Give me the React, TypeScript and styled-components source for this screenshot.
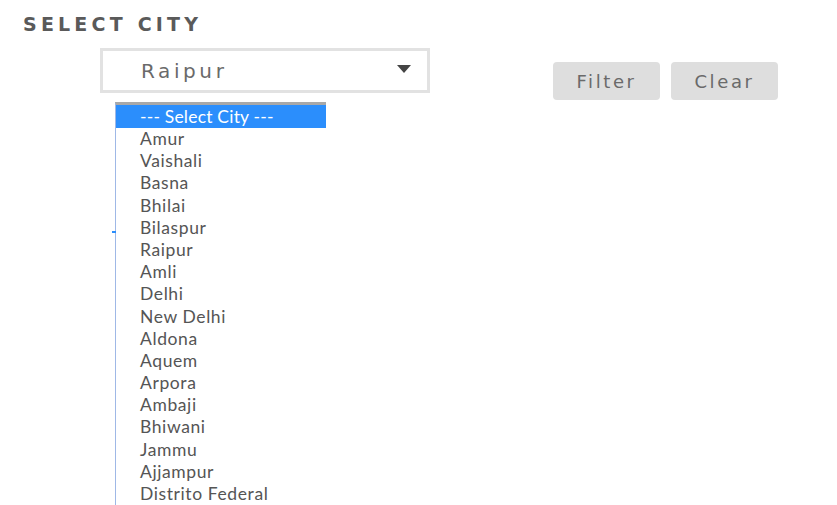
import React from "react";
import styled, { createGlobalStyle } from "styled-components";

const Global = createGlobalStyle`
  html, body { margin: 0; padding: 0; background: #ffffff; }
  body { width: 837px; height: 505px; overflow: hidden; }
`;

const Page = styled.div`
  padding: 11px 0 0 23px;
  display: flex;
  flex-direction: column;
`;

const Heading = styled.h2`
  margin: 0;
  font-family: "DejaVu Sans", sans-serif;
  font-weight: bold;
  font-size: 19px;
  letter-spacing: 4.2px;
  color: #5a5a5a;
  line-height: 26px;
`;

const Row = styled.div`
  display: flex;
  align-items: flex-start;
  margin-top: 11px;
  margin-left: 77px;
`;

const SelectWrap = styled.div`
  position: relative;
`;

const SelectBox = styled.div`
  box-sizing: border-box;
  width: 330px;
  height: 45px;
  border: 3px solid #e2e2e2;
  display: flex;
  align-items: center;
  justify-content: space-between;
  padding: 0 16px 0 38px;
  font-family: "DejaVu Sans", sans-serif;
  font-size: 20px;
  letter-spacing: 3.6px;
  color: #6a6a6a;
`;

const Caret = styled.span`
  width: 0;
  height: 0;
  border-left: 7px solid transparent;
  border-right: 7px solid transparent;
  border-top: 8px solid #444;
  margin-top: -4px;
`;

const List = styled.ul`
  position: absolute;
  top: 54px;
  left: 15px;
  width: 210px;
  margin: 0;
  padding: 0;
  list-style: none;
  border-top: 3px solid #a8a8a8;
  border-left: 1px solid #9fb8e6;
  font-family: Lato, "Open Sans", sans-serif;
  font-size: 17.5px;
  color: #555;
`;

const Option = styled.li<{ $active?: boolean }>`
  height: ${(p) => (p.$active ? "23px" : "22.2px")};
  line-height: ${(p) => (p.$active ? "23px" : "22.2px")};
  padding-left: 24px;
  white-space: nowrap;
  background: ${(p) => (p.$active ? "#2b8efc" : "transparent")};
  color: ${(p) => (p.$active ? "#ffffff" : "#555")};
  letter-spacing: ${(p) => (p.$active ? "0.2px" : "0.6px")};
`;

const Tick = styled.span`
  position: absolute;
  left: -4px;
  top: 126px;
  width: 4px;
  height: 2px;
  background: #2b8efc;
`;

const Buttons = styled.div`
  display: flex;
  gap: 11px;
  margin-left: 123px;
  margin-top: 14px;
`;

const Button = styled.button`
  width: 107px;
  height: 38px;
  border: none;
  border-radius: 4px;
  background: #dedede;
  font-family: "DejaVu Sans", sans-serif;
  font-size: 18px;
  letter-spacing: 2.6px;
  color: #6a6a6a;
  padding: 0;
`;

const cities = [
  "Amur",
  "Vaishali",
  "Basna",
  "Bhilai",
  "Bilaspur",
  "Raipur",
  "Amli",
  "Delhi",
  "New Delhi",
  "Aldona",
  "Aquem",
  "Arpora",
  "Ambaji",
  "Bhiwani",
  "Jammu",
  "Ajjampur",
  "Distrito Federal",
];

export default function App() {
  return (
    <>
      <Global />
      <Page>
        <Heading>SELECT CITY</Heading>
        <Row>
          <SelectWrap>
            <SelectBox>
              <span>Raipur</span>
              <Caret />
            </SelectBox>
            <List>
              <Option $active>--- Select City ---</Option>
              {cities.map((c) => (
                <Option key={c}>{c}</Option>
              ))}
              <Tick />
            </List>
          </SelectWrap>
          <Buttons>
            <Button>Filter</Button>
            <Button>Clear</Button>
          </Buttons>
        </Row>
      </Page>
    </>
  );
}
